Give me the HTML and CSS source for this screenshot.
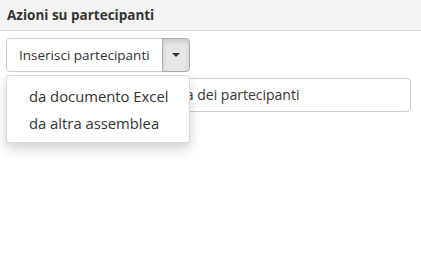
FILE: index.html
```html
<!DOCTYPE html>
<html lang="it">
<head>
  <meta charset="UTF-8" />
  <title>Azioni su partecipanti</title>
  <link rel="stylesheet" href="styles.css">
</head>
<body>
  <div class="panel-heading">Azioni su partecipanti</div>

  <div class="panel-body">
    <div class="btn-group">
      <button class="btn">Inserisci partecipanti</button>
      <button class="btn btn-caret"><span class="caret"></span></button>

      <!-- menu aperto -->
      <ul class="dropdown-menu">
        <li><a href="#">da documento Excel</a></li>
        <li><a href="#">da altra assemblea</a></li>
      </ul>
    </div>

    <button class="btn btn-block">Scarica lista dei partecipanti</button>
  </div>
</body>
</html>
```

FILE: styles.css
```css
html, body {
  height: 100%;
}

body {
  margin: 0;
  background: #fff;
  font-family: 'Open Sans', 'Liberation Sans', sans-serif;
  font-size: 14px;
  color: #333;
}

.panel-heading {
  background: #f5f5f5;
  border-bottom: 1px solid #ddd;
  font-size: 13.5px;
  font-weight: bold;
  color: #333;
  padding: 6px 7px 6px;
  line-height: 18px;
}

.panel-body {
  padding: 7px 10px 0 6px;
  display: flex;
  flex-direction: column;
  align-items: flex-start;
  gap: 6px;
}

.btn-group {
  position: relative;
  display: flex;
}

.btn {
  font-family: inherit;
  font-size: 14px;
  color: #333;
  background: #fff;
  border: 1px solid #ccc;
  border-radius: 4px;
  padding: 6px 12px;
  line-height: 20px;
  height: 34px;
  cursor: pointer;
}

.btn-group .btn:first-child {
  font-size: 13.5px;
  border-radius: 4px 0 0 4px;
  padding: 6px 12px 6px 12px;
}

.btn-caret {
  margin-left: -1px;
  border-radius: 0 4px 4px 0;
  padding: 6px 9px;
  background: #e6e6e6;
  border-color: #adadad;
  box-shadow: inset 0 3px 5px rgba(0, 0, 0, 0.125);
  display: flex;
  align-items: center;
}

.caret {
  display: inline-block;
  width: 0;
  height: 0;
  border-top: 4px solid #333;
  border-left: 4px solid transparent;
  border-right: 4px solid transparent;
}

.btn-block {
  align-self: stretch;
  text-align: center;
}

.dropdown-menu {
  position: absolute;
  top: 100%;
  left: 0;
  z-index: 10;
  margin: 3px 0 0;
  padding: 7px 0 5px;
  list-style: none;
  width: 184px;
  box-sizing: border-box;
  background: #fff;
  border: 1px solid rgba(0, 0, 0, 0.15);
  border-radius: 4px;
  box-shadow: 0 6px 12px rgba(0, 0, 0, 0.175);
}

.dropdown-menu a {
  display: block;
  padding: 4px 22px;
  font-size: 14.8px;
  line-height: 19px;
  color: #333;
  text-decoration: none;
  white-space: nowrap;
}
```
